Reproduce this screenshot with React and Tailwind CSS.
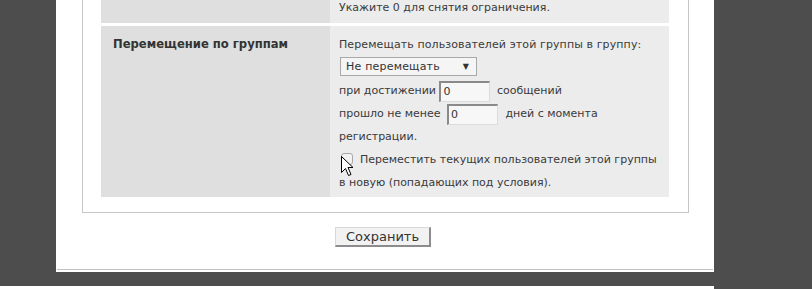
const font = { fontFamily: '"DejaVu Sans", Verdana, sans-serif' };

const NumberInput = ({ className = "" }) => (
    <span
        className={`inline-block align-middle -my-[4px] w-[51px] h-[21px] bg-[#f7f7f7] border-t-2 border-l-2 border-b border-r border-t-[#8a8a8a] border-l-[#8a8a8a] border-b-[#dcdcdc] border-r-[#dcdcdc] text-[11px] leading-[17px] pl-[2px] text-[#333] ${className}`}
    >
        0
    </span>
);

const Cursor = () => (
    <svg className="absolute left-[341px] top-[156px]" width="13" height="21" viewBox="0 0 13 21">
        <path d="M0.5 0.5 L0.5 16.5 L4.5 12.5 L7.5 19.5 L10 18.5 L7 11.5 L12 11.5 Z" fill="#fff" stroke="#000" strokeWidth="1" />
    </svg>
);

export default function App() {
    return (
        <div className="relative w-[812px] h-[289px] overflow-hidden bg-[#4d4d4d] text-[#3a3a3a]" style={font}>
            <div className="ml-[56px] w-[658px] bg-white h-[272px] flex flex-col">
                {/* fieldset */}
                <div className="ml-[26px] w-[607px] border-x border-b border-[#c6c6c6] pl-[18px] pr-[19px] pb-[15px]">
                    <div className="flex flex-col gap-[3px] w-[568px]">
                        <div className="flex h-[23px]">
                            <div className="w-[229px] bg-[#dedfde]" />
                            <div className="flex-1 bg-[#ececec] pl-[9px] text-[11px] leading-[15px]">
                                Укажите 0 для снятия ограничения.
                            </div>
                        </div>
                        <div className="flex">
                            <div className="w-[229px] bg-[#dedfde] pl-[12px] pt-[7px] text-[11.6px] leading-[23px] font-bold text-[#333]">
                                Перемещение по группам
                            </div>
                            <div className="flex-1 bg-[#ececec] pl-[9px] pr-[9px] pt-[7px] pb-[3px] text-[11px] leading-[23px]">
                                <div className="tracking-[0.1px]">Перемещать пользователей этой группы в группу:</div>
                                <div className="h-[23px] flex items-center">
                                    <div className="ml-[1px] -mt-[2px] w-[137px] h-[19px] border border-[#a9a9a9] bg-[#f5f5f5] flex items-center justify-between pl-[5px] pr-[7px] text-[11px] tracking-[0.2px] text-[#333]">
                                        <span>Не перемещать</span>
                                        <span className="text-[8px]">▼</span>
                                    </div>
                                </div>
                                <div>
                                    при достижении <NumberInput className="mr-[3px]" /> сообщений
                                </div>
                                <div>
                                    прошло не менее <NumberInput className="ml-[3px] mr-[4px]" /> дней с момента регистрации.
                                </div>
                                <div>
                                    <span className="inline-block align-middle w-[12px] h-[12px] rounded-[3px] border border-[#a8a8a8] bg-[#f3f3f3] ml-[2px] mr-[7px] -mt-[2px]" />
                                    Переместить текущих пользователей этой группы в новую (попадающих под условия).
                                </div>
                            </div>
                        </div>
                    </div>
                </div>
                <div className="flex justify-center mt-[14px] pr-[4px]">
                    <button
                        type="button"
                        className="w-[96px] h-[20px] bg-[#f2f2f2] border-t border-l border-b-2 border-r-2 border-t-[#d8d8d8] border-l-[#d8d8d8] border-b-[#8c8c8c] border-r-[#8c8c8c] text-[13px] leading-[16px] text-[#333]"
                        style={font}
                    >
                        Сохранить
                    </button>
                </div>
                <div className="mt-auto mb-[2px] mx-[1px] h-[1px] bg-[#c2c2c2]" />
            </div>
            <div className="mt-[14px] w-[714px] h-[3px] bg-white" />
            <Cursor />
        </div>
    );
}
